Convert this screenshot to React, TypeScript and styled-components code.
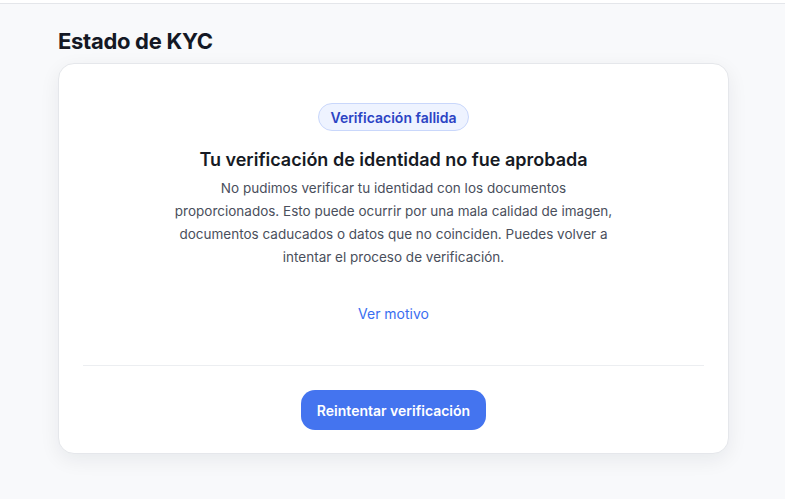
import * as React from 'react';
import styled, { createGlobalStyle } from 'styled-components';

const GlobalStyle = createGlobalStyle`
  html, body {
    margin: 0;
    padding: 0;
    background-color: #f8f9fb;
    font-family: Inter, "Noto Sans", sans-serif;
    -webkit-font-smoothing: antialiased;
  }
`;

const TopBar = styled.div`
  height: 3px;
  border-bottom: 1px solid #e4e6ea;
  background-color: #ffffff;
`;

const Page = styled.main`
  padding: 23px 56px 40px 58px;
`;

const Title = styled.h1`
  margin: 0 0 8px 0;
  font-size: 22px;
  line-height: 28px;
  font-weight: 700;
  color: #141824;
  letter-spacing: -0.3px;
`;

const Card = styled.section`
  width: 671px;
  box-sizing: border-box;
  background-color: #ffffff;
  border: 1px solid #e5e7eb;
  border-radius: 16px;
  box-shadow: 0 6px 20px rgba(17, 24, 39, 0.07);
  padding: 39px 24px 23px;
  display: flex;
  flex-direction: column;
  align-items: center;
`;

const Badge = styled.span`
  display: inline-flex;
  align-items: center;
  height: 28px;
  box-sizing: border-box;
  padding: 0 12px;
  border-radius: 999px;
  border: 1px solid #c9d7fb;
  background-color: #eef3ff;
  color: #2b43c4;
  font-size: 14px;
  font-weight: 600;
`;

const Heading = styled.h2`
  margin: 15px 0 3px 0;
  font-size: 18px;
  line-height: 28px;
  font-weight: 600;
  color: #161a24;
  text-align: center;
`;

const Description = styled.p`
  margin: 0;
  max-width: 450px;
  font-size: 13.5px;
  line-height: 23px;
  color: #4a4f5c;
  text-align: center;
`;

const LinkButton = styled.button`
  margin-top: 35px;
  border: none;
  background: none;
  padding: 0;
  font-family: inherit;
  font-size: 14px;
  line-height: 20px;
  color: #3a6ef0;
  cursor: pointer;
`;

const Divider = styled.hr`
  align-self: stretch;
  margin: 41px 0 24px 0;
  border: none;
  border-top: 1px solid #eceef1;
`;

const PrimaryButton = styled.button`
  height: 40px;
  padding: 0 16px;
  border: none;
  border-radius: 14px;
  background-color: #4474ef;
  color: #ffffff;
  font-family: inherit;
  font-size: 14px;
  font-weight: 600;
  cursor: pointer;
`;

export default function App() {
  return (
    <>
      <GlobalStyle />
      <TopBar />
      <Page>
        <Title>Estado de KYC</Title>
        <Card>
          <Badge>Verificación fallida</Badge>
          <Heading>Tu verificación de identidad no fue aprobada</Heading>
          <Description>
            No pudimos verificar tu identidad con los documentos proporcionados. Esto puede
            ocurrir por una mala calidad de imagen, documentos caducados o datos que no
            coinciden. Puedes volver a intentar el proceso de verificación.
          </Description>
          <LinkButton>Ver motivo</LinkButton>
          <Divider />
          <PrimaryButton>Reintentar verificación</PrimaryButton>
        </Card>
      </Page>
    </>
  );
}
